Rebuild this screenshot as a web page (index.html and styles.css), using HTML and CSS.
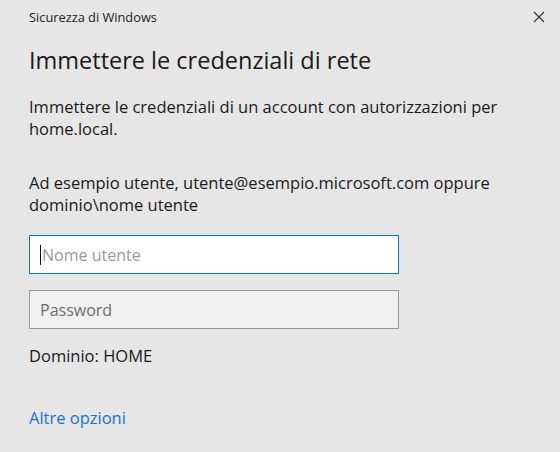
FILE: index.html
```html
<!DOCTYPE html>
<html lang="it">
<head>
<meta charset="utf-8">
<link rel="stylesheet" href="styles.css">
</head>
<body>
<div class="dialog">
  <div class="titlebar">
    <span class="app">Sicurezza di Windows</span>
    <svg class="close" width="12" height="12" viewBox="0 0 12 12"><path d="M1 1L11 11M11 1L1 11" stroke="#333" stroke-width="1.1" fill="none"/></svg>
  </div>
  <h1 class="heading">Immettere le credenziali di rete</h1>
  <p class="text">Immettere le credenziali di un account con autorizzazioni per home.local.</p>
  <p class="text">Ad esempio utente, utente@esempio.microsoft.com oppure dominio\nome utente</p>
  <div class="field focused"><span class="caret"></span><span class="ph">Nome utente</span></div>
  <div class="field"><span class="ph">Password</span></div>
  <p class="domain">Dominio: HOME</p>
  <a class="more" href="#">Altre opzioni</a>
</div>
</body>
</html>
```
FILE: styles.css
```css
html, body { margin: 0; padding: 0; }
body { background: #e6e6e6; width: 560px; height: 452px; overflow: hidden; font-family: "Open Sans", "Noto Sans", sans-serif; color: #1a1a1a; }
.dialog { padding: 0 29px; }
.titlebar { display: flex; justify-content: space-between; align-items: center; height: 34px; }
.app { font-size: 12.8px; color: #222; }
.close { margin-right: -14px; }
.heading { font-weight: 400; font-size: 23.5px; margin: 11px 0 0; line-height: 30px; color: #1a1a1a; }
.text { font-size: 16.5px; line-height: 22px; margin: 0; width: 500px; }
.heading + .text { margin-top: 21px; }
.text + .text { margin-top: 32px; }
.field { box-sizing: border-box; width: 370px; height: 39px; border: 1px solid #999; background: #f0f0f0; display: flex; align-items: center; padding: 0 10px; font-size: 16px; }
.field.focused { margin-top: 19px; border: 1px solid #0078d7; background: #fff; margin-bottom: 16px; }
.caret { display: inline-block; width: 1px; height: 20px; background: #111; margin-right: 1px; }
.ph { color: #6d6d6d; }
.field.focused .ph { color: #999; }
.domain { font-size: 16.5px; margin: 16px 0 0; line-height: 22px; }
.more { display: inline-block; margin-top: 40px; font-size: 16.5px; color: #1a73d1; text-decoration: none; line-height: 22px; }
```
